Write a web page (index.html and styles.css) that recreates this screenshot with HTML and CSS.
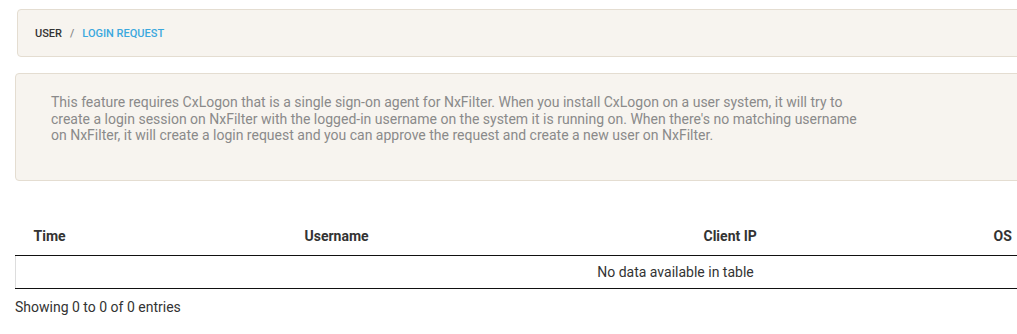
FILE: index.html
```html
<!DOCTYPE html>
<html lang="en">
<head>
  <meta charset="UTF-8">
  <title>Login Request</title>
  <link rel="stylesheet" href="styles.css">
</head>
<body>

<div class="page">
  <div class="breadcrumb">
    <span class="crumb">User</span>
    <span class="sep">/</span>
    <span class="crumb active">Login Request</span>
  </div>

  <div class="alert">
    <p>This feature requires CxLogon that is a single sign-on agent for NxFilter. When you install CxLogon on a user system, it will try to create a login session on NxFilter with the logged-in username on the system it is running on. When there's no matching username on NxFilter, it will create a login request and you can approve the request and create a new user on NxFilter.</p>
  </div>

  <table class="data-table">
    <thead>
      <tr>
        <th class="col-time">Time</th>
        <th class="col-user">Username</th>
        <th class="col-ip">Client IP</th>
        <th class="col-os">OS</th>
      </tr>
    </thead>
    <tbody>
      <tr>
        <td colspan="4" class="empty">No data available in table</td>
      </tr>
    </tbody>
  </table>
  <div class="info">Showing 0 to 0 of 0 entries</div>
</div>

</body>
</html>
```

FILE: styles.css
```css
body {
  margin: 0;
  font-family: Roboto, "Liberation Sans", sans-serif;
  background: #fff;
  overflow: hidden;
}

.page {
  width: 1320px;
  padding: 9px 0 0 15px;
}

.breadcrumb {
  margin-left: 2px;
  height: 46px;
  display: flex;
  align-items: center;
  padding-left: 17px;
  background: #f7f4ef;
  border: 1px solid #e4ddd1;
  border-radius: 4px;
  font-size: 11px;
  font-weight: 500;
  text-transform: uppercase;
}

.crumb {
  color: #333;
}

.sep {
  color: #888;
  margin: 0 8px;
}

.crumb.active {
  color: #3ba8de;
}

.alert {
  margin-top: 16px;
  height: 106px;
  padding: 0 0 0 35px;
  background: #f7f4ef;
  border: 1px solid #e4ddd1;
  border-radius: 4px;
}

.alert p {
  margin: 20px 0 0;
  max-width: 810px;
  font-size: 14px;
  line-height: 16.5px;
  color: #8a8a8a;
}

.data-table {
  margin-top: 37px;
  width: 1320px;
  border-collapse: collapse;
  table-layout: fixed;
  font-size: 14px;
}

.data-table th {
  text-align: left;
  font-weight: bold;
  color: #333;
  padding: 10px 18px 11px;
  line-height: 16px;
  border-bottom: 1px solid #111;
}

.col-time { width: 235px; }
.col-user { width: 363px; }
.col-ip { width: 254px; }

.data-table td {
  height: 32px;
  padding: 0;
  border-left: 1px solid #ddd;
  border-bottom: 1px solid #111;
  color: #333;
}

.data-table td.empty {
  text-align: center;
}

.info {
  margin-top: 10px;
  font-size: 14px;
  color: #333;
}
```
